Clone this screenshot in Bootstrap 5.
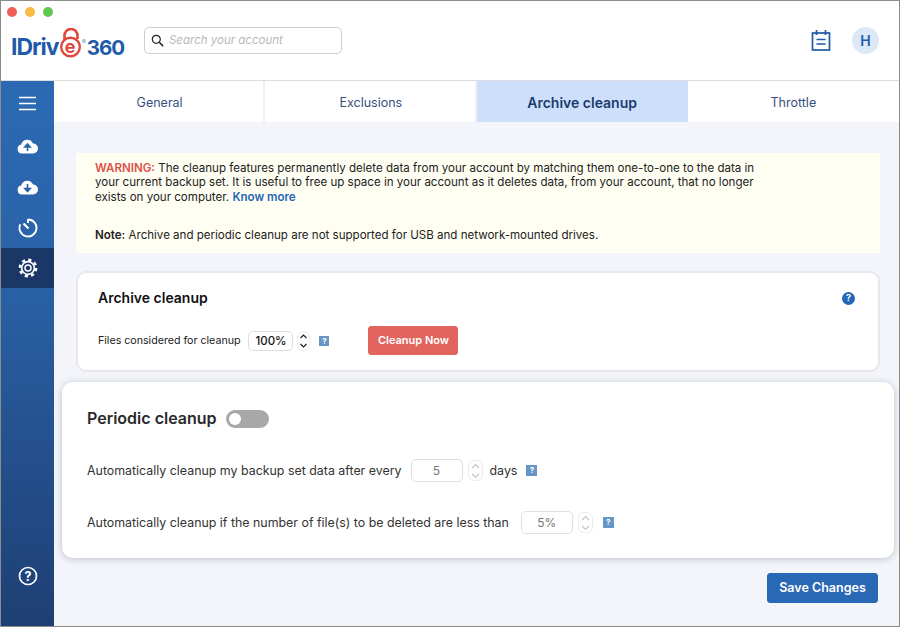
<!DOCTYPE html>
<html lang="en">
<head>
    <meta charset="UTF-8">
    <meta name="viewport" content="width=device-width, initial-scale=1.0">
    <title>IDrive 360 - Archive cleanup</title>
    <link href="https://cdn.jsdelivr.net/npm/bootstrap@5.3.0/dist/css/bootstrap.min.css" rel="stylesheet">
    <style>
        html, body { height: 100%; overflow: hidden; }
        body { font-family: Inter, "Liberation Sans", sans-serif; background: #fff; color: #222; }
        .app-window { height: 627px; width: 900px; border: 1px solid #8c8c8c; display: flex; flex-direction: column; }

        .top-bar { height: 80px; flex: none; border-bottom: 1px solid #dcdcdc; padding: 6px 0 0 6px; position: relative; }
        .lights { gap: 8px; }
        .lights span { width: 10px; height: 10px; border-radius: 50%; display: block; }
        .light-red { background: #ee5f57; }
        .light-yellow { background: #f8bc45; }
        .light-green { background: #5fc94f; }
        .top-row { margin-top: 10px; padding-left: 4px; height: 27px; }
        .brand { width: 133px; font-size: 23px; font-weight: 700; letter-spacing: -1px; color: #1f5ba8; line-height: 30px; white-space: nowrap; }
        .brand .e-mark { color: #e0473e; font-size: 18px; line-height: 1; font-weight: 700; position: relative; display: inline-block; width: 23px; text-align: center; letter-spacing: 0; vertical-align: 2px; }
        .brand .e-mark svg { position: absolute; left: 0; top: -10px; }
        .brand .reg { font-size: 6px; color: #5c94cf; vertical-align: 11px; margin: 0 1px 0 0; letter-spacing: 0; font-weight: 400; }
        .brand .num { font-size: 20.5px; letter-spacing: -1px; }
        .search-box { width: 198px; height: 27px; border: 1px solid #cfcfcf; border-radius: 5px; padding-left: 6px; gap: 5px; }
        .search-box em { font-size: 11.5px; color: #b9b9b9; margin-top: 1px; }
        .top-icons { position: absolute; right: 20px; top: 26px; gap: 21px; }
        .avatar-h { width: 27px; height: 27px; border-radius: 50%; background: #dce7f8; color: #1f5ba8; font-size: 14px; font-weight: 600; }

        .content-row { min-height: 0; }
        .content-col { min-width: 0; }
        .side-bar { width: 53px; flex: none; background: linear-gradient(180deg, #2b6ab3 0%, #2a62a8 35%, #1e3f73 100%); }
        .side-item { height: 41px; }
        .side-item.menu-item { height: 44px; }
        .side-item.active-item { background: #1b3768; height: 40px; }
        .side-bottom { margin-bottom: 30px; }

        .tab-strip { height: 41px; flex: none; background: #fff; }
        .tab-cell { flex: 1; font-size: 12.5px; color: #37517e; border-right: 2px solid #eef0f4; padding: 3px 0 0 2px; }
        .tab-cell:last-child { border-right-color: transparent; }
        .tab-cell.tab-on { background: #cddffb; color: #1c3b6e; font-weight: 600; font-size: 14px; border-right-color: #cddffb; padding-top: 1px; }

        .main-pane { background: #f3f5fa; flex: 1; padding: 31px 19px 0 22px; min-height: 0; }
        .warn-box { background: #fffef3; height: 100px; padding: 8px 19px; font-size: 11.55px; line-height: 14.4px; color: #222; }
        .warn-box p { max-width: 668px; }
        .warn-red { color: #e0504a; font-weight: 600; }
        .warn-link { color: #1f66b5; font-weight: 600; text-decoration: none; }
        .note-line { margin-top: 24px; }

        .archive-box { background: #fff; border: 2px solid #e6e8ee; border-radius: 10px; height: 101px; margin-top: 18px; padding: 15px 20px 0; }
        .archive-box h2 { font-size: 14px; font-weight: 600; color: #111; margin: 0; line-height: 20px; }
        .info-dot { width: 13px; height: 13px; border-radius: 50%; background: #2468b8; color: #fff; font-size: 9px; font-weight: 700; margin-right: 3px; }
        .archive-row { margin-top: 18px; font-size: 10.65px; color: #222; height: 29px; }
        .num-field { border: 1px solid #dfdfdf; border-radius: 5px; background: #fff; text-align: center; }
        .num-field.f-small { width: 45px; height: 20px; line-height: 18px; font-size: 11.5px; font-weight: 500; color: #111; margin-left: 8px; }
        .num-field.f-big { width: 52px; height: 23px; line-height: 21px; font-size: 12px; color: #777; }
        .first-field { margin-left: 9px; }
        .second-field { margin-left: 12px; }
        .stepper { width: 13px; border: 1px solid #ececec; border-radius: 6px; margin-left: 4px; background: #fff; }
        .stepper.s-small { height: 20px; }
        .stepper.s-big { width: 15px; height: 21px; margin-left: 5px; }
        .help-sq { width: 10px; height: 10px; background: #6596c6; color: #fff; font-size: 8px; font-weight: 700; line-height: 10px; text-align: center; display: block; }
        .help-archive { margin-left: 9px; }
        .help-big { width: 11px; height: 11px; line-height: 11px; margin-left: 10px; }
        .help-days { margin-left: 9px; }
        .days-text { margin-left: 7px; }
        .btn-clean { background: #e2645e; border: 1px solid #e2645e; color: #fff; font-size: 11px; font-weight: 600; width: 90px; height: 29px; padding: 0; border-radius: 3px; margin-left: 39px; }
        .btn-clean:hover { background: #d55650; color: #fff; }

        .periodic-box { background: #fff; border-radius: 11px; height: 176px; margin: 10px -14px 0 -14px; box-shadow: 0 1px 7px rgba(60, 70, 100, .3); padding: 25px 25px 0; }
        .periodic-box h2 { font-size: 16px; font-weight: 600; color: #2a2a2a; margin: 0; line-height: 22px; }
        .toggle-off { width: 43px; height: 18px; border-radius: 9px; background: #a8a8a8; position: relative; margin: 1px 0 0 9px; display: block; }
        .toggle-off::after { content: ""; position: absolute; left: 3px; top: 3px; width: 12px; height: 12px; border-radius: 50%; background: #fff; }
        .period-row { font-size: 12.4px; color: #333; height: 23px; white-space: nowrap; }
        .row-label { padding-top: 1px; }
        .first-row { margin-top: 30px; }
        .second-row { margin-top: 29px; }
        .btn-save { background: #2968b4; border: 1px solid #2968b4; color: #fff; font-size: 12.5px; font-weight: 600; width: 111px; height: 30px; padding: 1px 0 0; border-radius: 3px; margin-right: 2px; }
        .btn-save:hover { background: #215a9e; color: #fff; }
        .save-row { margin-top: 15px; }
    </style>
</head>
<body>
<div class="app-window">
    <div class="top-bar">
        <div class="lights d-flex">
            <span class="light-red"></span>
            <span class="light-yellow"></span>
            <span class="light-green"></span>
        </div>
        <div class="top-row d-flex align-items-start">
            <div class="brand">IDriv<span class="e-mark">e<svg width="24" height="30" viewBox="0 0 24 30"><path d="M5.500 12V7.500a6.500 6.500 0 0 1 13 0V11" fill="none" stroke="#e0473e" stroke-width="2.600"/><circle cx="11.500" cy="19" r="9.300" fill="none" stroke="#e0473e" stroke-width="2.400"/></svg></span><span class="reg">®</span><span class="num">360</span></div>
            <div class="search-box d-flex align-items-center">
                <svg width="13" height="13" viewBox="0 0 13 13"><circle cx="5.300" cy="5.300" r="4" fill="none" stroke="#222" stroke-width="1.200"/><path d="M8.300 8.300l3.800 3.800" stroke="#222" stroke-width="1.500"/></svg>
                <em>Search your account</em>
            </div>
        </div>
        <div class="top-icons d-flex align-items-center">
            <svg width="20" height="21" viewBox="0 0 20 21"><rect x="1.500" y="3" width="17" height="17" fill="none" stroke="#1f5ba8" stroke-width="1.700"/><path d="M5.500 0v5M14.500 0v5M5.500 9.500h9M5.500 14h9" stroke="#1f5ba8" stroke-width="1.700"/></svg>
            <div class="avatar-h d-flex align-items-center justify-content-center">H</div>
        </div>
    </div>
    <div class="content-row d-flex flex-grow-1">
        <div class="side-bar d-flex flex-column">
            <div class="side-item menu-item d-flex align-items-center justify-content-center">
                <svg width="17" height="15" viewBox="0 0 17 15"><path d="M0 1.500h17M0 7.500h17M0 13.500h17" stroke="#fff" stroke-width="1.500"/></svg>
            </div>
            <div class="side-item d-flex align-items-center justify-content-center">
                <svg width="21" height="16" viewBox="0 0 21 16"><path d="M5 15.500a4.500 4.500 0 0 1-.8-8.900A6.200 6.200 0 0 1 16 5.500a5 5 0 0 1 0 10z" fill="#fff"/><path d="M10.500 13V7.500M7.800 9l2.700-3 2.700 3z" stroke="#2a66ae" stroke-width="1.600" fill="#2a66ae"/></svg>
            </div>
            <div class="side-item d-flex align-items-center justify-content-center">
                <svg width="21" height="16" viewBox="0 0 21 16"><path d="M5 15.500a4.500 4.500 0 0 1-.8-8.900A6.200 6.200 0 0 1 16 5.500a5 5 0 0 1 0 10z" fill="#fff"/><path d="M10.500 5v5.500M7.800 9.500l2.700 3 2.700-3z" stroke="#2a62a8" stroke-width="1.600" fill="#2a62a8"/></svg>
            </div>
            <div class="side-item d-flex align-items-center justify-content-center">
                <svg width="20" height="20" viewBox="0 0 20 20"><path d="M10 1.500A8.500 8.500 0 1 1 2.300 6.400" fill="none" stroke="#fff" stroke-width="1.900"/><path d="M5.500 5.500L10.500 10.500" stroke="#fff" stroke-width="2.200"/><path d="M10 1v4" stroke="#fff" stroke-width="1.900"/></svg>
            </div>
            <div class="side-item active-item d-flex align-items-center justify-content-center">
                <svg width="20" height="20" viewBox="0 0 20 20"><circle cx="10" cy="10" r="7.200" fill="#fff"/><circle cx="10" cy="10" r="8.200" fill="none" stroke="#fff" stroke-width="2.400" stroke-dasharray="3.200 3.240"/><circle cx="10" cy="10" r="5.500" fill="#1b3768"/><circle cx="10" cy="10" r="3" fill="none" stroke="#fff" stroke-width="1.500"/></svg>
            </div>
            <div class="side-item side-bottom mt-auto d-flex align-items-center justify-content-center">
                <svg width="20" height="20" viewBox="0 0 20 20"><circle cx="10" cy="10" r="8.500" fill="none" stroke="#fff" stroke-width="1.700"/><text x="10" y="14.500" text-anchor="middle" font-family="Inter, sans-serif" font-size="12.500" font-weight="700" fill="#fff">?</text></svg>
            </div>
        </div>
        <div class="content-col d-flex flex-column flex-grow-1">
            <div class="tab-strip d-flex">
                <div class="tab-cell d-flex align-items-center justify-content-center">General</div>
                <div class="tab-cell d-flex align-items-center justify-content-center">Exclusions</div>
                <div class="tab-cell tab-on d-flex align-items-center justify-content-center">Archive cleanup</div>
                <div class="tab-cell d-flex align-items-center justify-content-center">Throttle</div>
            </div>
            <div class="main-pane">
                <div class="warn-box">
                    <p class="mb-0"><span class="warn-red">WARNING:</span> The cleanup features permanently delete data from your account by matching them one-to-one to the data in your current backup set. It is useful to free up space in your account as it deletes data, from your account, that no longer exists on your computer. <a href="#" class="warn-link">Know more</a></p>
                    <p class="note-line mb-0"><strong class="fw-semibold">Note:</strong> Archive and periodic cleanup are not supported for USB and network-mounted drives.</p>
                </div>
                <div class="archive-box">
                    <div class="d-flex justify-content-between align-items-center">
                        <h2>Archive cleanup</h2>
                        <span class="info-dot d-flex align-items-center justify-content-center">?</span>
                    </div>
                    <div class="archive-row d-flex align-items-center">
                        <span>Files considered for cleanup</span>
                        <div class="num-field f-small">100%</div>
                        <div class="stepper s-small d-flex flex-column align-items-center justify-content-center">
                            <svg width="9" height="16" viewBox="0 0 9 16"><path d="M1.500 5l3-3 3 3M1.500 11l3 3 3-3" fill="none" stroke="#222" stroke-width="1.200"/></svg>
                        </div>
                        <span class="help-sq help-archive">?</span>
                        <button type="button" class="btn btn-clean">Cleanup Now</button>
                    </div>
                </div>
                <div class="periodic-box">
                    <div class="d-flex align-items-center">
                        <h2>Periodic cleanup</h2>
                        <span class="toggle-off"></span>
                    </div>
                    <div class="period-row first-row d-flex align-items-center">
                        <span class="row-label">Automatically cleanup my backup set data after every</span>
                        <div class="num-field f-big first-field">5</div>
                        <div class="stepper s-big d-flex align-items-center justify-content-center">
                            <svg width="11" height="18" viewBox="0 0 11 18"><path d="M2 6l3.500-3.500L9 6M2 12l3.500 3.500L9 12" fill="none" stroke="#c4c4c4" stroke-width="1.200"/></svg>
                        </div>
                        <span class="row-label days-text">days</span>
                        <span class="help-sq help-big help-days">?</span>
                    </div>
                    <div class="period-row second-row d-flex align-items-center">
                        <span class="row-label">Automatically cleanup if the number of file(s) to be deleted are less than</span>
                        <div class="num-field f-big second-field">5%</div>
                        <div class="stepper s-big d-flex align-items-center justify-content-center">
                            <svg width="11" height="18" viewBox="0 0 11 18"><path d="M2 6l3.500-3.500L9 6M2 12l3.500 3.500L9 12" fill="none" stroke="#c4c4c4" stroke-width="1.200"/></svg>
                        </div>
                        <span class="help-sq help-big">?</span>
                    </div>
                </div>
                <div class="save-row d-flex justify-content-end">
                    <button type="button" class="btn btn-save">Save Changes</button>
                </div>
            </div>
        </div>
    </div>
</div>
<script src="https://cdn.jsdelivr.net/npm/bootstrap@5.3.0/dist/js/bootstrap.bundle.min.js"></script>
</body>
</html>
